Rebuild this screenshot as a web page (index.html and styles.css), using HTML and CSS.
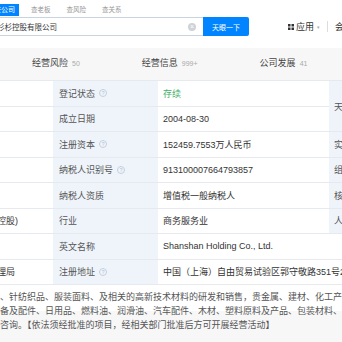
FILE: index.html
```html
<!DOCTYPE html>
<html lang="zh-CN">
<head>
    <meta charset="utf-8">
    <title>杉杉控股有限公司 - 工商信息</title>
    <link rel="stylesheet" href="styles.css">
</head>
<body>
    <header class="header">
        <nav class="top-tabs">
            <a class="top-tab active" href="#">查公司</a>
            <a class="top-tab" href="#">查老板</a>
            <a class="top-tab" href="#">查风险</a>
            <a class="top-tab" href="#">查关系</a>
        </nav>

        <div class="search-row">
            <div class="search-box">
                <span class="search-text">杉杉控股有限公司</span>
                <span class="clear-icon">&times;</span>
            </div>
            <button class="search-btn">天眼一下</button>

            <div class="apps">
                <svg class="apps-icon" width="6" height="6" viewBox="0 0 6 6">
                    <rect x="0" y="0" width="2.5" height="2.5" fill="#333"/>
                    <rect x="3.5" y="0" width="2.5" height="2.5" fill="#333"/>
                    <rect x="0" y="3.5" width="2.5" height="2.5" fill="#333"/>
                    <rect x="3.5" y="3.5" width="2.5" height="2.5" fill="#333"/>
                </svg>
                <span>应用</span>
                <span class="caret">&#9662;</span>
                <span class="divider"></span>
                <span>会员</span>
            </div>
        </div>
    </header>

    <div class="section-tabs">
        <span class="section-tab">经营风险<small>50</small></span>
        <span class="section-tab">经营信息<small>999+</small></span>
        <span class="section-tab">公司发展<small>41</small></span>
    </div>

    <div class="info-table">
        <div class="cell"></div>
        <div class="cell label">登记状态 <i class="help">?</i></div>
        <div class="cell value status">存续</div>
        <div class="cell label side tall">天眼评分</div>

        <div class="cell"></div>
        <div class="cell label">成立日期</div>
        <div class="cell value">2004-08-30</div>

        <div class="cell"></div>
        <div class="cell label">注册资本 <i class="help">?</i></div>
        <div class="cell value">152459.7553万人民币</div>
        <div class="cell label side">实缴资本</div>

        <div class="cell"></div>
        <div class="cell label">纳税人识别号 <i class="help">?</i></div>
        <div class="cell value">913100007664793857</div>
        <div class="cell label side">组织机构代码</div>

        <div class="cell"></div>
        <div class="cell label">纳税人资质</div>
        <div class="cell value">增值税一般纳税人</div>
        <div class="cell label side">核准日期</div>

        <div class="cell value cut">或控股)</div>
        <div class="cell label">行业</div>
        <div class="cell value">商务服务业</div>
        <div class="cell label side">人员规模</div>

        <div class="cell"></div>
        <div class="cell label">英文名称</div>
        <div class="cell value wide">Shanshan Holding Co., Ltd.</div>

        <div class="cell value cut">管理局</div>
        <div class="cell label">注册地址 <i class="help">?</i></div>
        <div class="cell value wide">中国（上海）自由贸易试验区郭守敬路351号2号楼</div>

        <div class="cell scope">
            <div>、针纺织品、服装面料、及相关的高新技术材料的研发和销售，贵金属、建材、化工产</div>
            <div>备及配件、日用品、燃料油、润滑油、汽车配件、木材、塑料原料及产品、包装材料、</div>
            <div>咨询。【依法须经批准的项目，经相关部门批准后方可开展经营活动】</div>
        </div>
    </div>
</body>
</html>
```

FILE: styles.css
```css
body {
    margin: 0;
    padding: 0;
    width: 342px;
    height: 342px;
    overflow: hidden;
    background-color: #f7f7f7;
    font-family: "Liberation Sans", "Noto Sans CJK SC", sans-serif;
    color: #333;
}

/* Header */
.header {
    height: 48px;
    background-color: #fff;
    overflow: hidden;
}

.top-tabs {
    display: flex;
    margin-left: -10px;
    padding-top: 4px;
}

.top-tab {
    height: 12px;
    line-height: 12px;
    padding: 0 4px;
    margin-right: 8px;
    font-size: 6.5px;
    color: #999;
    text-decoration: none;
}

.top-tab.active {
    background-color: #0084ff;
    color: #fff;
    font-size: 7px;
}

.search-row {
    display: flex;
    align-items: center;
    margin-top: 1px;
    height: 19px;
}

.search-box {
    display: flex;
    flex-shrink: 0;
    align-items: center;
    box-sizing: border-box;
    width: 223px;
    height: 19px;
    margin-left: -20px;
    padding-left: 16px;
    padding-right: 7px;
    border: 1px solid #c8d4e0;
    border-right: none;
    font-size: 7.5px;
}

.search-text {
    flex: 1;
}

.clear-icon {
    width: 8px;
    height: 8px;
    line-height: 8px;
    border-radius: 50%;
    background-color: #cfd2d6;
    color: #fff;
    font-size: 7px;
    text-align: center;
}

.search-btn {
    flex-shrink: 0;
    width: 46px;
    height: 19px;
    padding: 0;
    border: none;
    border-radius: 0 2px 2px 0;
    background-color: #0084ff;
    color: #fff;
    font-family: inherit;
    font-size: 7px;
}

.apps {
    display: flex;
    flex-shrink: 0;
    align-items: center;
    margin-left: 39px;
    font-size: 9px;
    white-space: nowrap;
}

.apps-icon {
    margin-right: 2px;
}

.caret {
    margin-left: 3px;
    font-size: 5px;
    color: #aaa;
}

.divider {
    width: 1px;
    height: 11px;
    margin: 0 7px 0 7px;
    background-color: #ddd;
}

/* Section tabs */
.section-tabs {
    display: flex;
    gap: 62px;
    height: 32px;
    line-height: 30px;
    padding-left: 32px;
    font-size: 9px;
    color: #444;
    white-space: nowrap;
}

.section-tab small {
    margin-left: 4px;
    font-size: 7px;
    color: #aaa;
}

/* Info table */
.info-table {
    display: grid;
    grid-template-columns: 53px 105px 171px 60px;
    grid-auto-rows: 25.5px;
    border-top: 1px solid #e6e9ee;
    background-color: #fff;
    font-size: 9px;
}

.cell {
    display: flex;
    align-items: center;
    box-sizing: border-box;
    border-bottom: 1px solid #e6e9ee;
    white-space: nowrap;
    overflow: hidden;
}

.label {
    padding-left: 6px;
    background-color: #eff4fb;
    color: #555;
}

.value {
    padding-left: 5px;
    color: #333;
}

.status {
    color: #3fae6a;
}

.side {
    padding-left: 5px;
}

.tall {
    grid-row: span 2;
}

.wide {
    grid-column: span 2;
}

.cut {
    padding-left: 0;
    margin-left: -12px;
}

.help {
    display: inline-block;
    box-sizing: border-box;
    width: 8px;
    height: 8px;
    margin-left: 4px;
    border: 1px solid #c5d0de;
    border-radius: 50%;
    color: #b3c0d0;
    font-size: 5px;
    font-style: normal;
    line-height: 6px;
    text-align: center;
}

.scope {
    grid-column: 1 / -1;
    display: block;
    height: 60px;
    padding-top: 5px;
    border-bottom: none;
    font-size: 9px;
    line-height: 14px;
    color: #555;
}
```
